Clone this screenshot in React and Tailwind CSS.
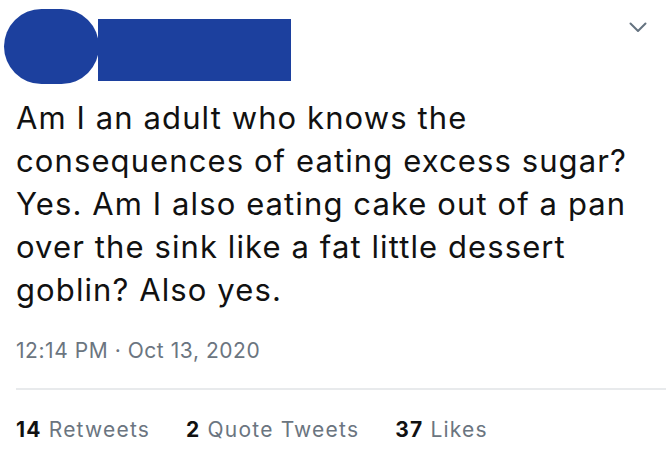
export default function App() {
  return (
    <div className="w-[672px] h-[464px] bg-white overflow-hidden" style={{ fontFamily: 'Inter, "Noto Sans", sans-serif' }}>
      {/* Header: redacted avatar + name */}
      <div className="flex items-start pl-1 pr-6 pt-[9px]">
        <div className="w-[95px] h-[75px] rounded-full bg-[#1c409e] shrink-0" />
        <div className="w-[193px] h-[62px] mt-[10px] -ml-px bg-[#1c409e]" />
        <div className="flex-1" />
        <svg width="18" height="11" viewBox="0 0 18 11" className="mt-[13px] mr-[1px]" fill="none">
          <path d="M1.5 1.5 L9 9 L16.5 1.5" stroke="#657380" strokeWidth="2" strokeLinecap="round" strokeLinejoin="round" />
        </svg>
      </div>

      {/* Tweet text */}
      <div className="px-4 mt-[12px] text-[31px] leading-[43px] text-[#111] tracking-[1.1px]">
        Am I an adult who knows the consequences of eating excess sugar? Yes. Am I also eating cake out of a pan over the sink like a fat little dessert goblin? Also yes.
      </div>

      {/* Timestamp */}
      <div className="px-4 mt-[27px] text-[21px] leading-[26px] text-[#6b7580] tracking-[0.55px]">
        12:14 PM · Oct 13, 2020
      </div>

      {/* Divider */}
      <div className="ml-4 mr-[6px] mt-[24px] h-[2px] bg-[#e8eaec]" />

      {/* Stats */}
      <div className="flex px-4 mt-[27px] text-[21px] leading-[26px] gap-[36px] tracking-[1.2px]">
        <span><b className="text-[#111] font-bold">14</b> <span className="text-[#6b7580]">Retweets</span></span>
        <span><b className="text-[#111] font-bold">2</b> <span className="text-[#6b7580]">Quote Tweets</span></span>
        <span><b className="text-[#111] font-bold">37</b> <span className="text-[#6b7580]">Likes</span></span>
      </div>
    </div>
  );
}
